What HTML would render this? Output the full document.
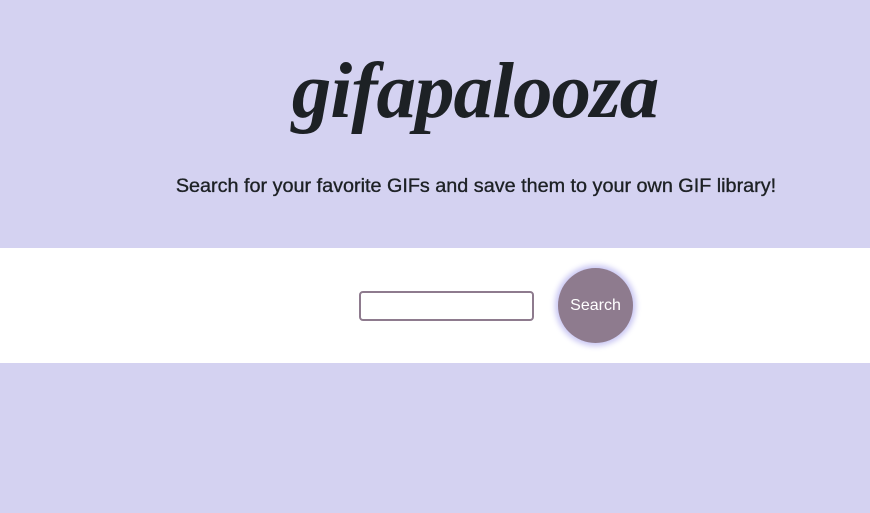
<!DOCTYPE html>
<html><head><style>
body{margin:0;width:870px;height:513px;background:#d4d2f1;font-family:"Liberation Sans",sans-serif;position:relative;overflow:hidden}
h1{position:absolute;left:0;width:950px;text-align:center;top:42px;margin:0;font:italic bold 79px/100px "Liberation Serif",serif;color:#1d2125;letter-spacing:-1px}
p{position:absolute;left:0;width:952px;text-align:center;top:175px;margin:0;font-size:19.8px;color:#1d2125;-webkit-text-stroke:0.35px #1d2125}
.band{position:absolute;top:248px;left:0;width:870px;height:115px;background:#fff}
input{position:absolute;left:359px;top:291px;width:171px;height:26px;border:2px solid #8e7b8e;border-radius:4px;box-sizing:content-box;padding:0;margin:0}
.btn{position:absolute;left:558px;top:268px;width:75px;height:75px;border-radius:50%;background:#8e7b8e;box-shadow:0 0 6px 3px #c9c6f3;color:#fff;font-size:16px;text-align:center;line-height:76px}
</style></head><body>
<h1>gifapalooza</h1>
<p>Search for your favorite GIFs and save them to your own GIF library!</p>
<div class="band"></div>
<input type="text">
<div class="btn">Search</div>
</body></html>
